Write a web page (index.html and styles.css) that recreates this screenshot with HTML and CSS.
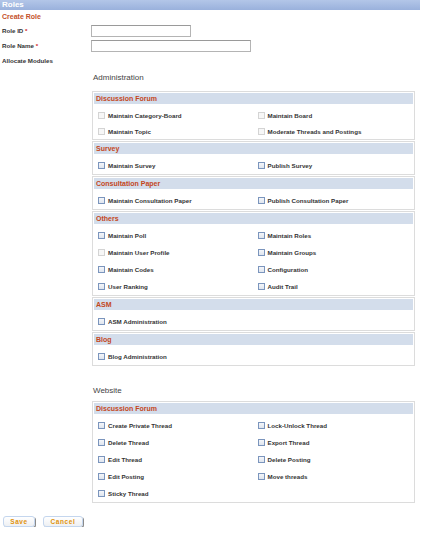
FILE: index.html
```html
<!DOCTYPE html>
<html>
<head>
<meta charset="utf-8">
<title>Roles</title>
<link rel="stylesheet" href="styles.css">
</head>
<body>
<div class="titlebar">Roles</div>
<div class="page">
  <div class="subtitle">Create Role</div>
  <div class="form-row first"><span class="flabel">Role ID <span class="req">*</span></span><span class="txt short"></span></div>
  <div class="form-row"><span class="flabel">Role Name <span class="req">*</span></span><span class="txt long"></span></div>
  <div class="alloc">Allocate Modules</div>

  <div class="group">
    <div class="group-title">Administration</div>
    <div class="section compact">
      <div class="section-head">Discussion Forum</div>
      <div class="items">
        <div class="item"><span class="cb dis"></span>Maintain Category-Board</div>
        <div class="item"><span class="cb dis"></span>Maintain Board</div>
        <div class="item"><span class="cb dis"></span>Maintain Topic</div>
        <div class="item"><span class="cb dis"></span>Moderate Threads and Postings</div>
      </div>
    </div>
    <div class="section">
      <div class="section-head">Survey</div>
      <div class="items">
        <div class="item"><span class="cb"></span>Maintain Survey</div>
        <div class="item"><span class="cb"></span>Publish Survey</div>
      </div>
    </div>
    <div class="section">
      <div class="section-head">Consultation Paper</div>
      <div class="items">
        <div class="item"><span class="cb"></span>Maintain Consultation Paper</div>
        <div class="item"><span class="cb"></span>Publish Consultation Paper</div>
      </div>
    </div>
    <div class="section">
      <div class="section-head">Others</div>
      <div class="items">
        <div class="item"><span class="cb"></span>Maintain Poll</div>
        <div class="item"><span class="cb"></span>Maintain Roles</div>
        <div class="item"><span class="cb dis"></span>Maintain User Profile</div>
        <div class="item"><span class="cb"></span>Maintain Groups</div>
        <div class="item"><span class="cb"></span>Maintain Codes</div>
        <div class="item"><span class="cb"></span>Configuration</div>
        <div class="item"><span class="cb"></span>User Ranking</div>
        <div class="item"><span class="cb"></span>Audit Trail</div>
      </div>
    </div>
    <div class="section">
      <div class="section-head">ASM</div>
      <div class="items">
        <div class="item"><span class="cb"></span>ASM Administration</div>
      </div>
    </div>
    <div class="section">
      <div class="section-head">Blog</div>
      <div class="items">
        <div class="item"><span class="cb"></span>Blog Administration</div>
      </div>
    </div>
  </div>

  <div class="group website">
    <div class="group-title">Website</div>
    <div class="section">
      <div class="section-head">Discussion Forum</div>
      <div class="items">
        <div class="item"><span class="cb"></span>Create Private Thread</div>
        <div class="item"><span class="cb"></span>Lock-Unlock Thread</div>
        <div class="item"><span class="cb"></span>Delete Thread</div>
        <div class="item"><span class="cb"></span>Export Thread</div>
        <div class="item"><span class="cb"></span>Edit Thread</div>
        <div class="item"><span class="cb"></span>Delete Posting</div>
        <div class="item"><span class="cb"></span>Edit Posting</div>
        <div class="item"><span class="cb"></span>Move threads</div>
        <div class="item"><span class="cb"></span>Sticky Thread</div>
      </div>
    </div>
  </div>

  <div class="buttons">
    <span class="btn save">Save</span>
    <span class="btn cancel">Cancel</span>
  </div>
</div>
</body>
</html>
```
FILE: styles.css
```css
html, body {
  margin: 0;
  padding: 0;
  background: #ffffff;
}
body {
  font-family: "Liberation Sans", Arial, sans-serif;
  color: #333;
}
.titlebar {
  width: 420px;
  height: 10px;
  line-height: 10px;
  background: linear-gradient(#b3c6e8, #9ab1dc);
  color: #fff;
  font-weight: bold;
  font-size: 8px;
  padding-left: 2px;
  box-sizing: border-box;
}
.page {
  padding: 0 0 0 2px;
}
.subtitle {
  margin-top: 1px;
  height: 11px;
  line-height: 11px;
  font-size: 7px;
  font-weight: bold;
  color: #c4502a;
}
.form-row {
  display: flex;
  align-items: center;
  height: 15px;
}
.form-row.first {
  margin-top: 1px;
}
.flabel {
  width: 89px;
  font-size: 6.2px;
  font-weight: bold;
  color: #333;
}
.req {
  color: #d0261c;
}
.txt {
  display: block;
  height: 12px;
  box-sizing: border-box;
  border: 1px solid #b4b4b4;
  border-top-color: #9a9a9a;
  background: #fff;
}
.txt.short { width: 100px; }
.txt.long { width: 160px; }
.alloc {
  margin-top: 1px;
  height: 14px;
  line-height: 14px;
  font-size: 6.2px;
  font-weight: bold;
  color: #333;
}
.group {
  margin-left: 90px;
  width: 323px;
}
.group-title {
  margin-top: 4px;
  height: 12px;
  line-height: 12px;
  font-size: 8px;
  color: #444;
  padding-left: 1px;
}
.group > .group-title + .section {
  margin-top: 7px;
}
.website .group-title {
  margin-top: 19px;
}
.website > .group-title + .section {
  margin-top: 4px;
}
.section {
  border: 1px solid #dcdcdc;
  padding: 1px 1px 0 1px;
  margin-bottom: 1px;
}
.section-head {
  height: 11px;
  line-height: 11px;
  background: #d3ddeb;
  color: #c3461c;
  font-weight: bold;
  font-size: 7px;
  padding-left: 2px;
}
.items {
  display: grid;
  grid-template-columns: 1fr 1fr;
  padding-top: 3px;
}
.item {
  height: 17px;
  display: flex;
  align-items: center;
  padding-left: 4px;
  font-size: 6.2px;
  font-weight: bold;
  color: #333;
}
.compact .item {
  height: 16px;
}
.cb {
  width: 7px;
  height: 7px;
  box-sizing: border-box;
  border: 1px solid #7b95bd;
  background: linear-gradient(#f4f6fa, #dfe5ee);
  margin-right: 3px;
  flex: none;
}
.cb.dis {
  border-color: #d4d4d4;
  background: #f7f7f7;
}
.buttons {
  display: flex;
  gap: 8px;
  margin-top: 13px;
  padding-left: 1px;
}
.btn {
  display: block;
  height: 11px;
  line-height: 10px;
  box-sizing: border-box;
  border: 1px solid #c4d6ee;
  border-radius: 3px;
  background: linear-gradient(#ffffff, #eef0f3);
  box-shadow: 1px 1px 0 #8a8a8a;
  color: #e0920a;
  font-weight: bold;
  font-size: 6.5px;
  letter-spacing: 0.6px;
  text-align: center;
}
.btn.save { width: 32px; }
.btn.cancel { width: 40px; }
```
